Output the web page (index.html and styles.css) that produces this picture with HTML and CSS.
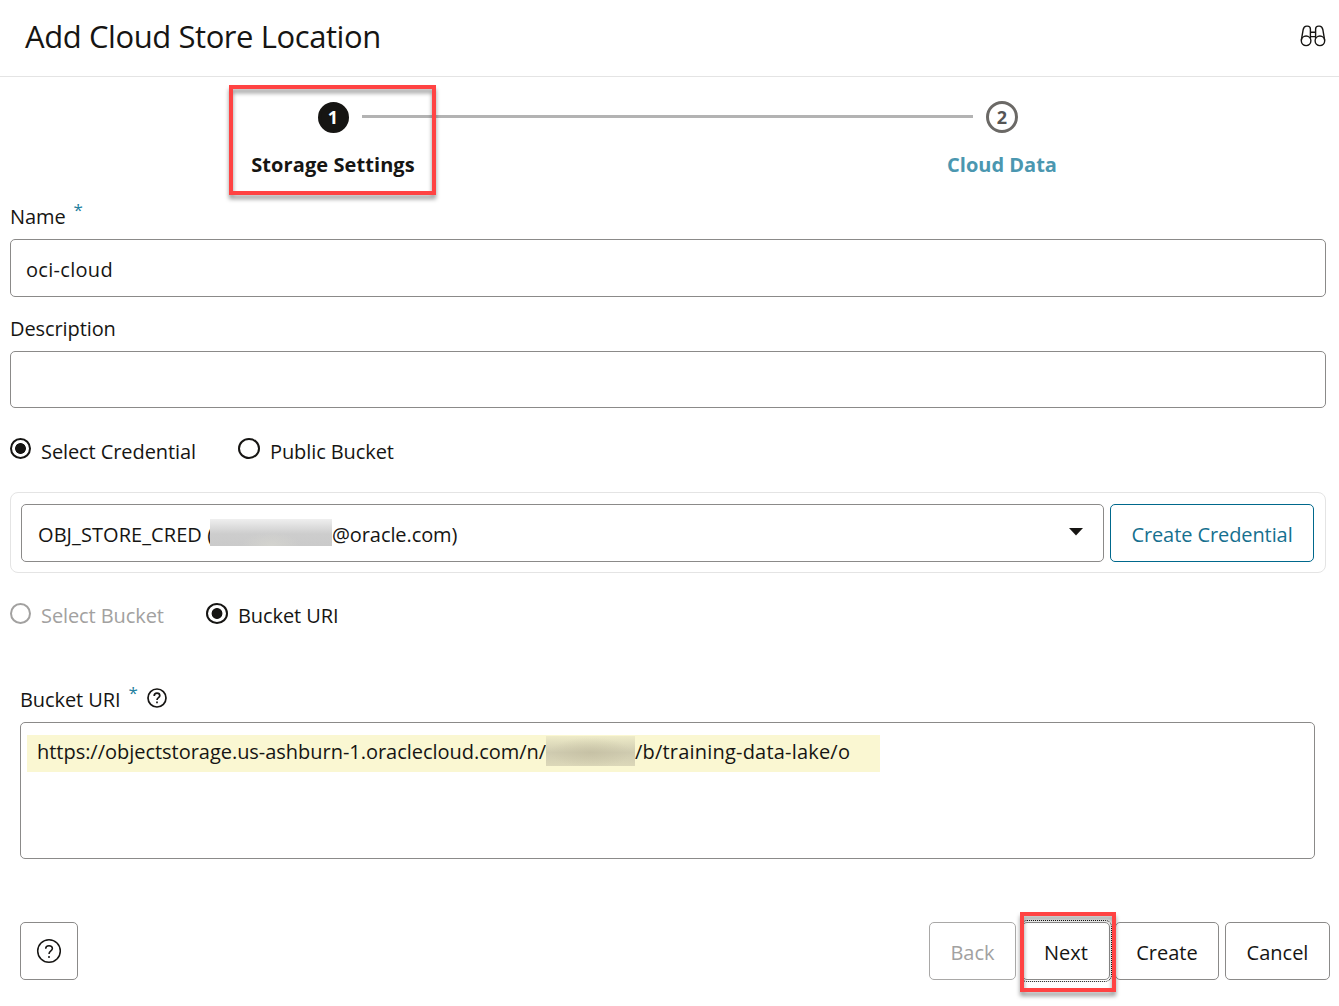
FILE: index.html
```html
<!DOCTYPE html>
<html lang="en">
<head>
<meta charset="utf-8">
<title>Add Cloud Store Location</title>
<link rel="stylesheet" href="styles.css">
</head>
<body>
<div class="dialog">
  <header class="header">
    <h1 class="title">Add Cloud Store Location</h1>
    <svg class="binoculars" width="26" height="24" viewBox="0 0 26 24" fill="none" stroke="#161513" stroke-width="1.4">
      <circle cx="6.1" cy="16.8" r="4.8"/><circle cx="19.9" cy="16.8" r="4.8"/>
      <path d="M1.3 16.4 3.2 5.5C3.7 3 4.6 2.1 6.6 2.1H7.4C9.3 2.1 10.4 3.1 10.4 4.9V14.5M24.7 16.4 22.8 5.5C22.3 3 21.4 2.1 19.4 2.1H18.6C16.7 2.1 15.6 3.1 15.6 4.9V14.5M10.4 8.2H15.6M10.4 12.6H15.6"/>
    </svg>
  </header>

  <nav class="train">
    <div class="step step-one">
      <span class="dot dot-current">1</span>
      <span class="step-label t-storage">Storage Settings</span>
      <span class="callout callout-step"></span>
    </div>
    <div class="connector"></div>
    <div class="step step-two">
      <span class="dot">2</span>
      <span class="step-label step-label-next">Cloud Data</span>
    </div>
  </nav>

  <main class="form">
    <label class="label label-name"><span class="t-tight">Name</span><sup class="req">*</sup></label>
    <div class="field"><span class="t-oci">oci-cloud</span></div>
    <label class="label label-desc"><span class="t-tight">Description</span></label>
    <div class="field field-desc"></div>

    <div class="radios radios-cred">
      <div class="option option-a"><span class="radio checked"></span><span class="t-tight">Select Credential</span></div>
      <div class="option"><span class="radio"></span><span class="t-tight">Public Bucket</span></div>
    </div>

    <section class="cred-group">
      <div class="select">
        <span class="t-cred">OBJ_STORE_CRED (</span><span class="masked"></span><span class="t-tight">@oracle.com)</span>
        <svg class="caret" width="14" height="8" viewBox="0 0 14 8"><path d="M0 0H14L7 7.5Z" fill="#161513"/></svg>
      </div>
      <button class="button button-link"><span class="t-tight">Create Credential</span></button>
    </section>

    <div class="radios radios-bucket">
      <div class="option option-b disabled"><span class="radio"></span><span class="t-tight">Select Bucket</span></div>
      <div class="option"><span class="radio checked"></span><span class="t-tight">Bucket URI</span></div>
    </div>

    <section class="uri">
      <label class="label label-uri"><span class="t-tight">Bucket URI</span><sup class="req">*</sup>
        <svg class="help" width="20" height="20" viewBox="0 0 20 20" fill="none" stroke="#161513" stroke-width="1.7"><circle cx="10" cy="10" r="9"/><path d="M7.2 7.9C7.2 6.1 8.4 5.2 10 5.2S12.8 6.1 12.8 7.7C12.8 9.6 10 9.7 10 11.9"/><path d="M10 13.5V15.2"/></svg>
      </label>
      <div class="textarea">
        <div class="marked"><span class="t-url">https://objectstorage.us-ashburn-1.oraclecloud.com/n/</span><span class="masked masked-url"></span><span class="t-path">/b/training-data-lake/o</span></div>
      </div>
    </section>
  </main>

  <footer class="footer">
    <button class="button button-help"><svg width="26" height="26" viewBox="0 0 26 26" fill="none" stroke="#161513" stroke-width="1.5"><circle cx="13" cy="13" r="11.3"/><path d="M9.7 10.7C9.7 8.6 11 7.7 13 7.7S16.4 8.8 16.4 10.6C16.4 13 13 13 13 16.1"/><path d="M13 18V20"/></svg></button>
    <div class="actions">
      <button class="button button-back">Back</button>
      <div class="next-slot"><button class="button button-next">Next</button><span class="callout callout-next"></span></div>
      <button class="button button-create">Create</button>
      <button class="button button-cancel">Cancel</button>
    </div>
  </footer>
</div>
</body>
</html>
```
FILE: styles.css
```css
* { box-sizing: border-box; }
body {
  margin: 0;
  background: #fff;
  color: #161513;
  font: 20px/28px "Open Sans", "Noto Sans", sans-serif;
}
.dialog { width: 1339px; height: 1006px; display: flex; flex-direction: column; overflow: hidden; }
.header {
  height: 77px; flex: none; display: flex; justify-content: space-between;
  padding: 15px 13px 0 25px; border-bottom: 1px solid #e4e4e4;
}
.title { margin: 0; font-size: 31px; line-height: 42px; font-weight: 400; letter-spacing: -.42px; white-space: nowrap; }
.binoculars { margin-top: 9px; }

.train { height: 124px; flex: none; display: flex; padding: 8px 0 0 229px; }
.step { position: relative; height: 110px; display: flex; flex-direction: column; align-items: center; }
.step-one { width: 207px; }
.step-two { width: 206px; }
.connector { width: 611px; height: 3px; margin: 30px -74px 0; background: #b3b3b3; }
.dot {
  width: 32px; height: 32px; margin-top: 16px; border: 3px solid #6b6966; border-radius: 50%;
  display: flex; align-items: center; justify-content: center;
  font-size: 18px; line-height: 20px; font-weight: 700; color: #555;
}
.dot-current { width: 31px; height: 31px; margin: 17px 0 0 1px; padding-bottom: 1px; background: #161513; border-color: #161513; color: #fff; }
.step-label { margin-top: 18px; font-weight: 700; line-height: 28px; white-space: nowrap; }
.step-label-next { color: #4b97b0; }

.t-storage { margin-left: 1px; letter-spacing: .08px; }
.t-tight { letter-spacing: -.09px; }
.t-oci { letter-spacing: .3px; }
.t-url { width: 509px; letter-spacing: -.03px; }
.t-path { letter-spacing: .2px; }

.callout { position: absolute; border: 4px solid #ff4343; filter: drop-shadow(0 4px 2px rgba(0, 0, 0, .4)); }
.callout-step { inset: 0; }
.callout-next { left: -2px; top: -10px; width: 96px; height: 80px; }

.form { height: 659px; flex: none; padding: 1px 13px 0 10px; }
.label { display: flex; height: 37px; white-space: nowrap; line-height: 28px; }
.label-name, .label-uri { padding-top: 1px; }
.req { width: 9px; margin: -4px 0 0 8px; font-size: 17px; line-height: 22px; color: #227e9e; }
.field {
  height: 58px; padding: 16px 15px 0; border: 1px solid #8b8a89; border-radius: 5px; line-height: 28px;
}
.label-desc { height: 36px; margin-top: 18px; }
.field-desc { height: 57px; }

.radios { display: flex; height: 28px; white-space: nowrap; }
.radios-cred { margin-top: 30px; }
.radios-bucket { margin-top: 29px; }
.option { display: flex; line-height: 28px; }
.option-a { width: 228px; }
.option-b { width: 196px; }
.radio {
  width: 21px; height: 21px; margin: 1px 10px 0 0; border: 2px solid #161513; border-radius: 50%;
}
.radios-cred .radio { margin-top: 0; }
.option:last-child .radio { width: 22px; }
.checked { background: radial-gradient(circle, #161513 5px, transparent 5.8px); }
.disabled { color: #a2a1a0; }
.disabled .radio { border-color: #a2a1a0; }

.cred-group {
  display: flex; gap: 6px; height: 81px; margin-top: 26px; padding: 11px 11px 0 10px;
  border: 1px solid #e4e4e4; border-radius: 8px;
}
.select {
  flex: 1; display: flex; height: 58px; padding: 16px 20px 0 16px; white-space: nowrap;
  border: 1px solid #8b8a89; border-radius: 5px;
}
.t-cred { width: 172px; letter-spacing: .07px; }
.masked {
  position: relative; width: 122px; height: 27px; margin-top: -2px;
  background: radial-gradient(ellipse at 50% 100%, rgba(214, 214, 208, .8), transparent 35%), linear-gradient(#efefef, #cdcdcd 55%, #cacaca);
}
.caret { margin: 7px 0 0 auto; }
.button {
  display: flex; justify-content: center; height: 58px; padding: 16px 0 0; background: #fff;
  border: 1px solid #8b8a89; border-radius: 5px; font: inherit; color: inherit; white-space: nowrap;
}
.button-link { width: 204px; border-color: #00688c; color: #16708f; }

.uri { margin-top: 55px; padding: 0 11px 0 10px; }
.help { margin: 2px 0 0 10px; }
.textarea { height: 137px; padding: 12px 6px; border: 1px solid #8b8a89; border-radius: 5px; }
.marked { display: flex; width: 853px; height: 37px; padding: 3px 0 0 10px; background: #faf7d2; white-space: nowrap; }
.masked-url {
  width: 89px; height: 30px;
  background: radial-gradient(ellipse at 50% 55%, rgba(190, 184, 155, .5), transparent 65%), linear-gradient(#eeebc8, #cfcbb0 55%, #dcd8b9);
}

.footer { display: flex; justify-content: space-between; padding: 62px 9px 0 20px; }
.button-help { width: 58px; align-items: center; padding: 0; }
.actions { display: flex; }
.button-back { width: 87px; margin-right: 6px; border-color: #a9a8a7; color: #a2a1a0; }
.next-slot { position: relative; z-index: 1; width: 88px; height: 58px; margin-right: 5px; }
.button-next { width: 88px; outline: 1px dotted #161513; outline-offset: 1px; }
.button-create { width: 104px; margin-right: 6px; }
.button-cancel { width: 105px; }
```
